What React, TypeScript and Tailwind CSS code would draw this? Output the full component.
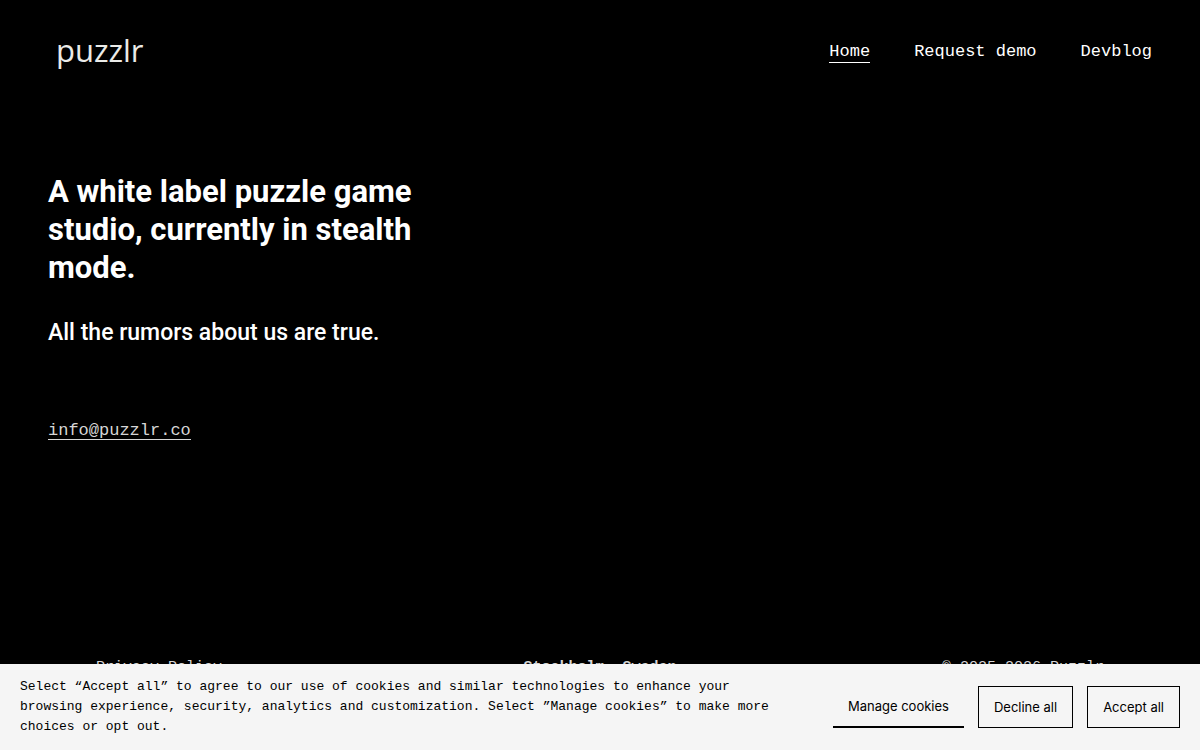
import { useState } from "react";
import clsx from "clsx";

const navLinks = [
  { label: "Home", href: "#home", current: true },
  { label: "Request demo", href: "#request-demo", current: false },
  { label: "Devblog", href: "#devblog", current: false },
];

function Header() {
  return (
    <header className="flex items-center justify-between px-12 pt-7">
      <a
        href="#home"
        className="px-2 pb-1 font-['Open_Sans',sans-serif] text-[31px] leading-11 font-normal text-[#ebebe8]"
      >
        puzzlr
      </a>
      <nav className="flex gap-11 text-[17px] leading-5">
        {navLinks.map((link) => (
          <a
            key={link.label}
            href={link.href}
            aria-current={link.current ? "page" : undefined}
            className={clsx(
              "border-b",
              link.current ? "border-white" : "border-transparent",
            )}
          >
            {link.label}
          </a>
        ))}
      </nav>
    </header>
  );
}

function Hero() {
  return (
    <main className="flex-1 px-12 pt-[97px]">
      <div className="max-w-96 font-[Roboto,sans-serif]">
        <h1 className="text-[31px] leading-[38px] font-bold">
          A white label puzzle game studio, currently in stealth mode.
        </h1>
        <p className="mt-8 text-[23px] leading-7 font-medium">
          All the rumors about us are true.
        </p>
      </div>
      <a
        href="mailto:info@puzzlr.co"
        className="mt-19 inline-block border-b border-[#d6d6d6] text-[17px] leading-4 text-[#d6d6d6]"
      >
        info@puzzlr.co
      </a>
    </main>
  );
}

function Footer() {
  return (
    <footer className="grid grid-cols-3 px-24 pb-[70px] text-[15px] leading-6 text-[#d6d6d6]">
      <a href="#privacy-policy" className="justify-self-start">
        Privacy Policy
      </a>
      <strong className="text-center">Stockholm, Sweden</strong>
      <p className="text-right">© 2025-2026 Puzzlr</p>
    </footer>
  );
}

function CookieBanner({ onClose }: { onClose: () => void }) {
  return (
    <section
      aria-label="Cookies"
      className="fixed inset-x-0 bottom-0 flex items-center gap-10 bg-[#f5f5f5] px-5 py-[13px] text-black"
    >
      <p className="flex-1 text-[13px] leading-5">
        Select “Accept all” to agree to our use of cookies and similar
        technologies to enhance your browsing experience, security, analytics
        and customization. Select ”Manage cookies” to make more choices or opt
        out.
      </p>
      <div className="flex gap-[14px] font-[Inter,sans-serif] text-[13px] leading-5">
        <button
          type="button"
          className="border-b-2 border-black px-[15px] py-[10px]"
        >
          Manage cookies
        </button>
        <button
          type="button"
          onClick={onClose}
          className="border border-black px-[15px] py-[10px]"
        >
          Decline all
        </button>
        <button
          type="button"
          onClick={onClose}
          className="border border-black px-[15px] py-[10px]"
        >
          Accept all
        </button>
      </div>
    </section>
  );
}

export default function App() {
  const [showCookies, setShowCookies] = useState(true);

  return (
    <div className="flex min-h-screen flex-col bg-black font-['Liberation_Mono',monospace] text-white">
      <Header />
      <Hero />
      <Footer />
      {showCookies && <CookieBanner onClose={() => setShowCookies(false)} />}
    </div>
  );
}
